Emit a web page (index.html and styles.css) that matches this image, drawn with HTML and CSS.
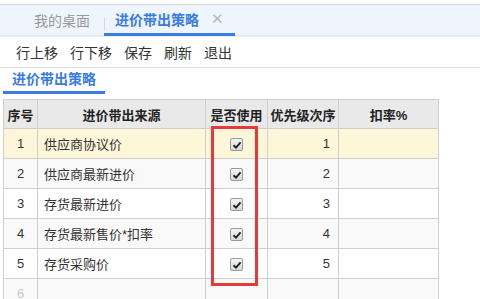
FILE: index.html
```html
<!DOCTYPE html>
<html lang="zh-CN">
<head>
    <title>进价带出策略</title>
    <link rel="stylesheet" href="styles.css">
</head>
<body>
    <div class="topline"></div>
    <div class="tabs">
        <div class="tab">我的桌面</div>
        <div class="tab active">进价带出策略<span class="close">✕</span></div>
    </div>
    <div class="toolbar">
        <span>行上移</span>
        <span>行下移</span>
        <span>保存</span>
        <span>刷新</span>
        <span>退出</span>
    </div>
    <div class="subtabs">
        <div class="subtab">进价带出策略</div>
    </div>
    <div class="grid-wrap">
        <table class="grid">
            <colgroup>
                <col class="c-no">
                <col class="c-src">
                <col class="c-use">
                <col class="c-pri">
                <col class="c-rate">
            </colgroup>
            <thead>
                <tr>
                    <th>序号</th>
                    <th>进价带出来源</th>
                    <th>是否使用</th>
                    <th>优先级次序</th>
                    <th>扣率%</th>
                </tr>
            </thead>
            <tbody>
                <tr class="current">
                    <td class="no">1</td>
                    <td>供应商协议价</td>
                    <td class="use"><span class="check"><svg viewBox="0 0 10 10" width="10" height="10"><path d="M1.5 5.2 L4 7.6 L8.6 2.4" fill="none" stroke="#222" stroke-width="1.9"/></svg></span></td>
                    <td class="num">1</td>
                    <td></td>
                </tr>
                <tr>
                    <td class="no">2</td>
                    <td>供应商最新进价</td>
                    <td class="use"><span class="check"><svg viewBox="0 0 10 10" width="10" height="10"><path d="M1.5 5.2 L4 7.6 L8.6 2.4" fill="none" stroke="#222" stroke-width="1.9"/></svg></span></td>
                    <td class="num">2</td>
                    <td></td>
                </tr>
                <tr>
                    <td class="no">3</td>
                    <td>存货最新进价</td>
                    <td class="use"><span class="check"><svg viewBox="0 0 10 10" width="10" height="10"><path d="M1.5 5.2 L4 7.6 L8.6 2.4" fill="none" stroke="#222" stroke-width="1.9"/></svg></span></td>
                    <td class="num">3</td>
                    <td></td>
                </tr>
                <tr>
                    <td class="no">4</td>
                    <td>存货最新售价*扣率</td>
                    <td class="use"><span class="check"><svg viewBox="0 0 10 10" width="10" height="10"><path d="M1.5 5.2 L4 7.6 L8.6 2.4" fill="none" stroke="#222" stroke-width="1.9"/></svg></span></td>
                    <td class="num">4</td>
                    <td></td>
                </tr>
                <tr>
                    <td class="no">5</td>
                    <td>存货采购价</td>
                    <td class="use"><span class="check"><svg viewBox="0 0 10 10" width="10" height="10"><path d="M1.5 5.2 L4 7.6 L8.6 2.4" fill="none" stroke="#222" stroke-width="1.9"/></svg></span></td>
                    <td class="num">5</td>
                    <td></td>
                </tr>
                <tr class="empty">
                    <td class="no">6</td>
                    <td></td>
                    <td></td>
                    <td></td>
                    <td></td>
                </tr>
            </tbody>
        </table>
        <div class="mark"></div>
    </div>
</body>
</html>
```

FILE: styles.css
```css
html, body {
    margin: 0;
    padding: 0;
    background: #fff;
    overflow: hidden;
}
body {
    font-family: "Liberation Sans", "Noto Sans CJK SC", sans-serif;
    font-size: 13px;
    color: #333;
}
.topline {
    height: 4px;
    border-bottom: 1px solid #d6d6d6;
}
.tabs {
    display: flex;
    align-items: stretch;
    height: 30px;
    padding-left: 34px;
    background: #eff5fd;
    border-bottom: 2px solid #e6ecf3;
}
.tab {
    display: flex;
    align-items: center;
    font-size: 14px;
    color: #999;
}
.tab:first-child {
    width: 70px;
}
.tab.active {
    position: relative;
    padding: 0 11px;
    color: #3a7ce0;
    font-weight: bold;
    border-bottom: 3px solid #3a7ce0;
    margin-bottom: -1px;
}
.tab.active::before {
    content: "";
    position: absolute;
    left: 0;
    top: 12px;
    height: 14px;
    border-left: 1px solid #d4dbe4;
}
.close {
    margin-left: 12px;
    font-size: 15px;
    font-weight: normal;
    color: #b8b8b8;
}
.toolbar {
    display: flex;
    align-items: center;
    gap: 12px;
    height: 30px;
    padding-left: 16px;
    border-bottom: 1px solid #dcdcdc;
    font-size: 14px;
    color: #333;
}
.subtabs {
    display: flex;
    height: 26px;
    padding-left: 3px;
}
.subtab {
    width: 102px;
    text-align: center;
    line-height: 22px;
    font-size: 14px;
    font-weight: bold;
    color: #3a7ce0;
    border-bottom: 3px solid #3a7ce0;
}
.grid-wrap {
    position: relative;
    margin-top: 5px;
    padding-left: 3px;
}
.grid {
    border-collapse: collapse;
    table-layout: fixed;
    width: 435px;
}
.c-no { width: 34px; }
.c-src { width: 168px; }
.c-use { width: 62px; }
.c-pri { width: 71px; }
.c-rate { width: 100px; }
.grid th, .grid td {
    border: 1px solid #cfcfcf;
    height: 29px;
    padding: 0 6px;
    white-space: nowrap;
    overflow: hidden;
}
.grid th {
    height: 28px;
    background: #e9e9e9;
    font-weight: bold;
    text-align: center;
    color: #222;
    padding: 0;
}
.grid td.no {
    text-align: center;
    padding: 0;
}
.grid td.num {
    text-align: right;
    padding-right: 8px;
}
.grid td.use {
    text-align: center;
    padding: 0;
}
.grid tbody tr:nth-child(even) td {
    background: #f9f9f9;
}
.grid tr.current td {
    background: #fdf6d8;
}
.grid tr.empty td.no {
    color: #c8c8c8;
}
.check {
    display: inline-flex;
    align-items: center;
    justify-content: center;
    width: 11px;
    height: 11px;
    border: 1px solid #9a9a9a;
    border-radius: 2px;
    background: linear-gradient(#f4f4f4, #d8d8d8);
    vertical-align: middle;
}
.mark {
    position: absolute;
    left: 211px;
    top: 27px;
    width: 41px;
    height: 154px;
    border: 3px solid #e53a3a;
}
```
